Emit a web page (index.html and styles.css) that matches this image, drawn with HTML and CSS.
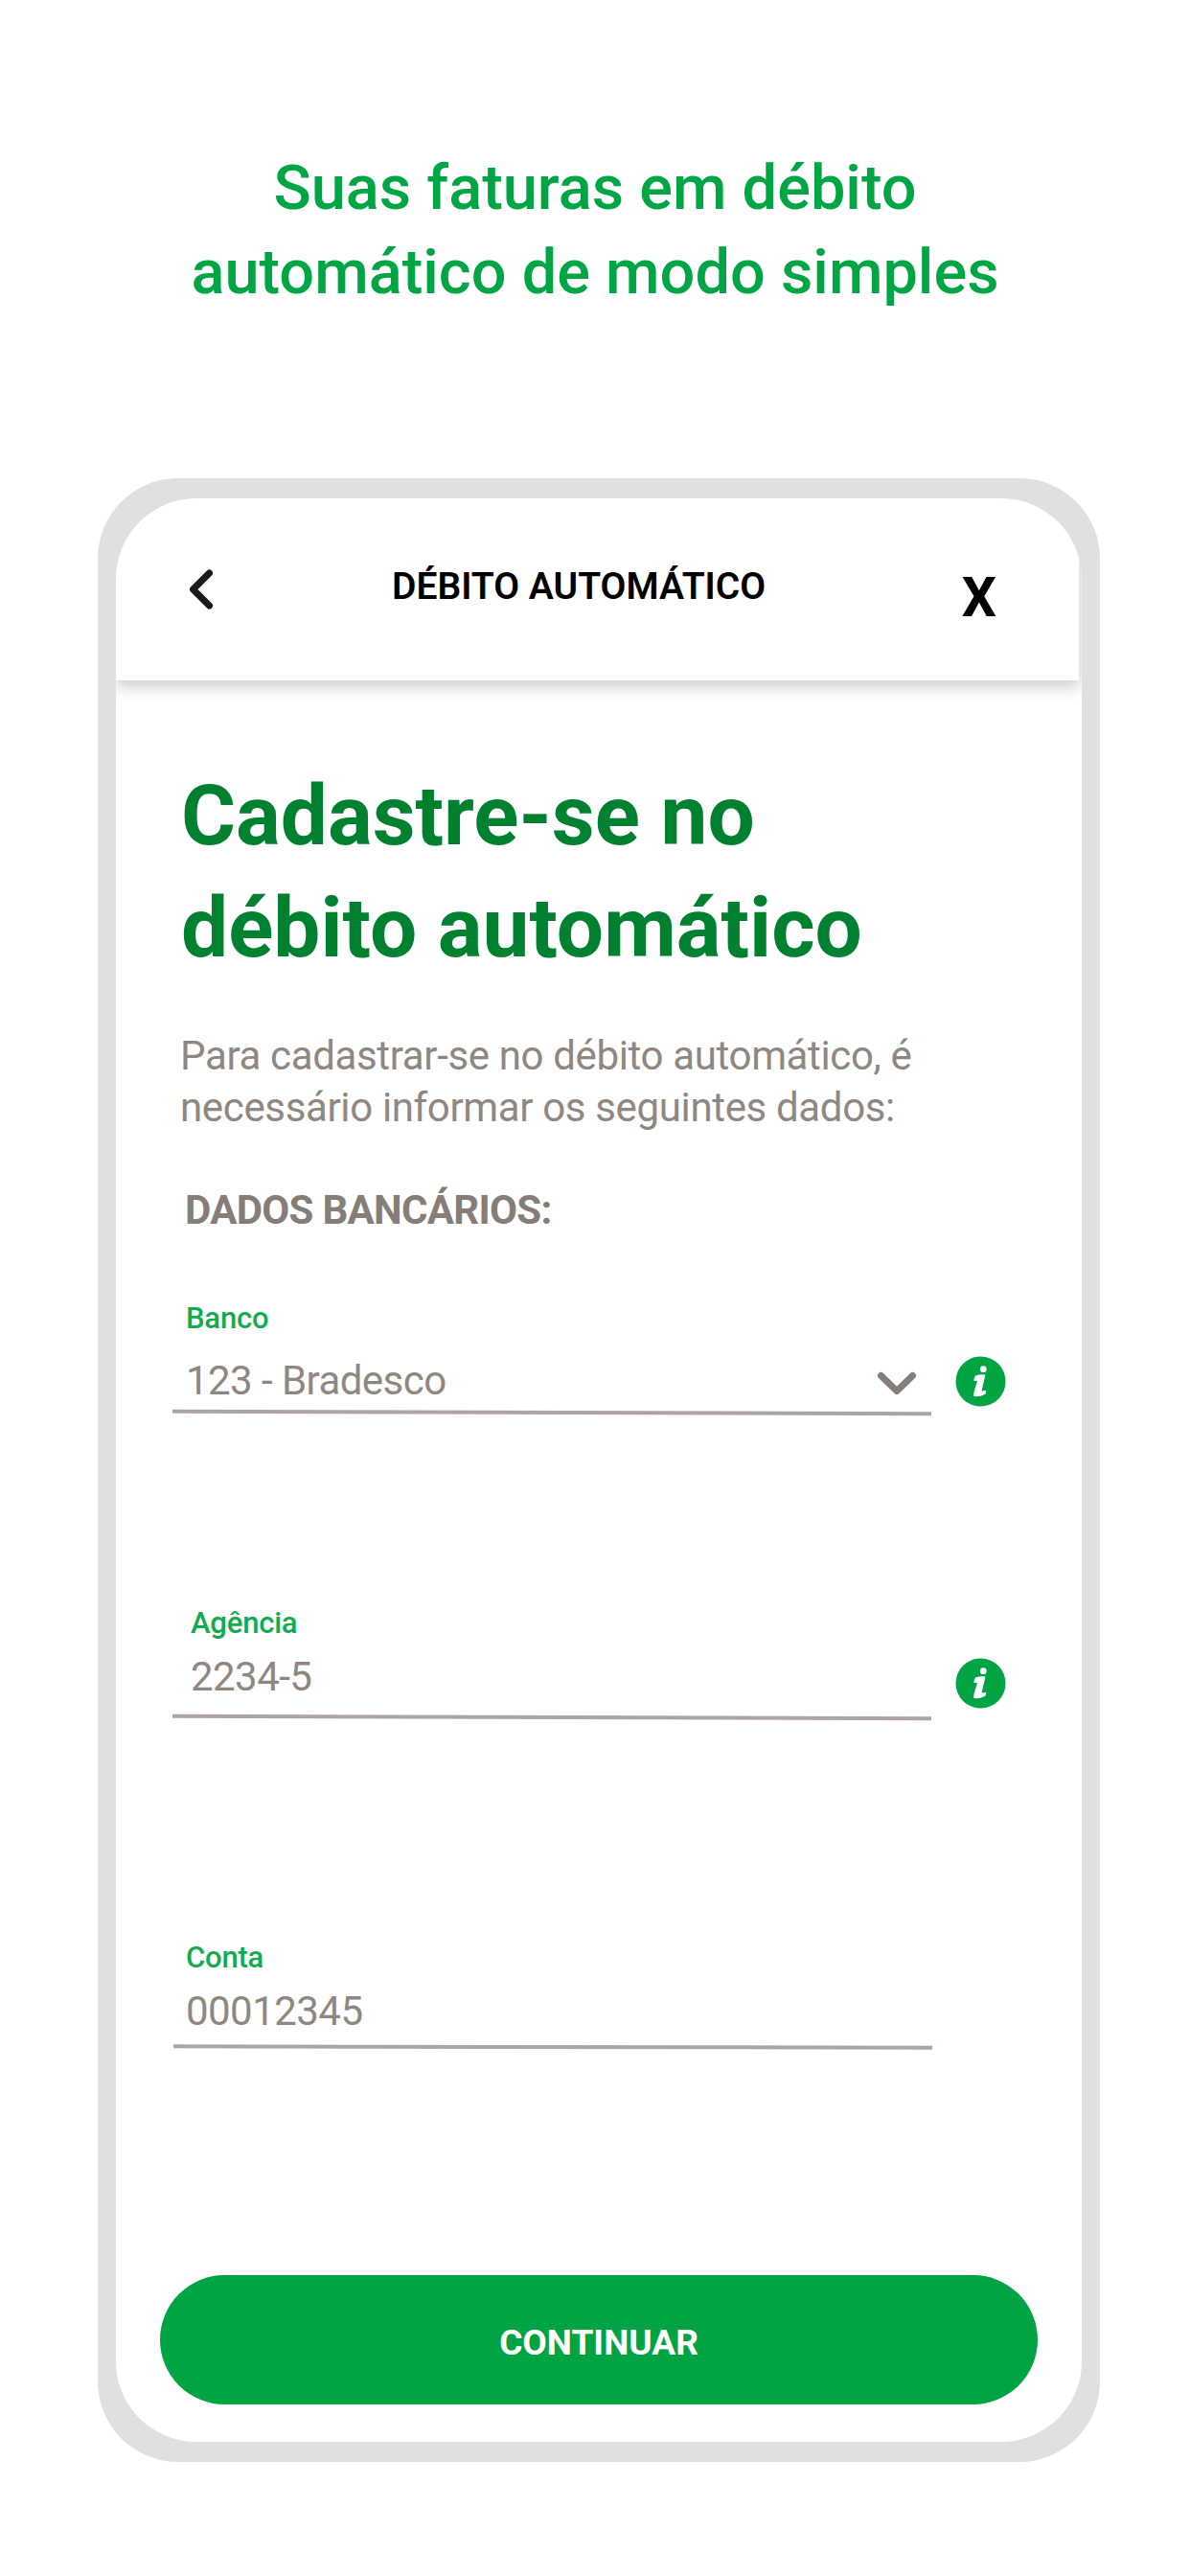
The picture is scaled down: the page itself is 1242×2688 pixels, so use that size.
FILE: index.html
```html
<!DOCTYPE html>
<html lang="pt-BR">
<head>
  <meta charset="UTF-8" />
  <meta name="viewport" content="width=device-width, initial-scale=1.0">
  <title>Débito Automático</title>
  <link rel="stylesheet" href="styles.css">
</head>
<body>
  <h1 class="headline">Suas faturas em débito<br>automático de modo simples</h1>

  <div class="phone">
    <div class="screen">
      <header class="topbar">
        <svg class="back" width="26" height="44" viewBox="0 0 26 44">
          <path d="M21.5 5 L4.5 22 L21.5 39" fill="none" stroke="#1a1a1a" stroke-width="7" stroke-linecap="round" stroke-linejoin="round" />
        </svg>
        <div class="topbar-title">DÉBITO AUTOMÁTICO</div>
        <div class="close">X</div>
      </header>

      <main class="content">
        <h2 class="title">Cadastre-se no<br>débito automático</h2>
        <p class="intro">Para cadastrar-se no débito automático, é<br>necessário informar os seguintes dados:</p>
        <h3 class="section">DADOS BANCÁRIOS:</h3>

        <div class="field banco">
          <div class="field-body">
            <div class="label">Banco</div>
            <div class="value">
              <span>123 - Bradesco</span>
              <svg class="chevron" width="42" height="28" viewBox="0 0 42 28">
                <path d="M4.5 4.5 L21 20.5 L37.5 4.5" fill="none" stroke="#857e79" stroke-width="7" stroke-linecap="round" stroke-linejoin="round" />
              </svg>
            </div>
            <div class="line"></div>
          </div>
          <svg class="info" width="53" height="53" viewBox="0 0 53 53">
            <circle cx="26.5" cy="26.5" r="26" fill="#00a443" />
            <circle cx="29.3" cy="13.7" r="3.4" fill="#fff" />
            <path d="M21 20.5 Q26 18.5 31.5 19.5 L27.5 36.5 L32 36 Q32.5 38 31 40 Q25 43 19.5 42 Q18.7 40 20 36 L23 26 L19.5 26 Q19.3 23 21 20.5 Z" fill="#fff" />
          </svg>
        </div>

        <div class="field agencia">
          <div class="field-body">
            <div class="label">Agência</div>
            <div class="value"><span>2234-5</span></div>
            <div class="line"></div>
          </div>
          <svg class="info" width="53" height="53" viewBox="0 0 53 53">
            <circle cx="26.5" cy="26.5" r="26" fill="#00a443" />
            <circle cx="29.3" cy="13.7" r="3.4" fill="#fff" />
            <path d="M21 20.5 Q26 18.5 31.5 19.5 L27.5 36.5 L32 36 Q32.5 38 31 40 Q25 43 19.5 42 Q18.7 40 20 36 L23 26 L19.5 26 Q19.3 23 21 20.5 Z" fill="#fff" />
          </svg>
        </div>

        <div class="field conta">
          <div class="field-body">
            <div class="label">Conta</div>
            <div class="value"><span>00012345</span></div>
            <div class="line"></div>
          </div>
        </div>

        <button class="continue-btn">CONTINUAR</button>
      </main>
    </div>
  </div>
</body>
</html>
```
FILE: styles.css
```css
* {
  box-sizing: border-box;
}

body {
  background-color: #fff;
  font-family: Roboto, Arial, sans-serif;
  margin: 0;
  padding: 0;
}

.headline {
  margin: 0;
  padding-top: 152px;
  height: 499px;
  color: #00a544;
  font-size: 64.9px;
  font-weight: 500;
  line-height: 88px;
  text-align: center;
}

.phone {
  width: 1046px;
  height: 2070px;
  margin-left: 102px;
  padding: 21px 19px;
  background: #e0e0e0;
  border-radius: 84px;
}

.screen {
  height: 2028px;
  background: #fff;
  border-radius: 84px;
  overflow: hidden;
}

.topbar {
  display: flex;
  align-items: center;
  height: 190px;
  width: 1005px;
  padding: 0 86px 0 76px;
  box-shadow: 0 6px 16px rgba(0, 0, 0, 0.22);
}

.topbar-title {
  margin-left: 186px;
  padding-bottom: 6px;
  font-size: 39px;
  font-weight: 600;
  line-height: 46px;
  white-space: nowrap;
  color: #000;
}

.close {
  margin-left: auto;
  padding-top: 18px;
  font-size: 57px;
  font-weight: bold;
  line-height: 66px;
  color: #000;
}

.content {
  padding: 83px 45px 0 46px;
}

.title {
  margin: 0 0 48px 22px;
  color: #008130;
  font-size: 87.3px;
  font-weight: bold;
  line-height: 117px;
}

.intro {
  margin: 0 0 55px 21px;
  color: #8f8781;
  font-size: 42px;
  letter-spacing: -0.35px;
  line-height: 54px;
  white-space: nowrap;
}

.section {
  margin: 0 0 70px 26px;
  color: #857d77;
  font-size: 42px;
  font-weight: bold;
  letter-spacing: -0.7px;
  line-height: 50px;
}

.field {
  display: flex;
  align-items: flex-end;
  gap: 25px;
  margin-left: 13px;
}

.field-body {
  width: 792px;
}

.label {
  padding-left: 14px;
  color: #12ab50;
  font-size: 31px;
  font-weight: 500;
  letter-spacing: -0.2px;
  line-height: 36px;
}

.value {
  display: flex;
  align-items: center;
  justify-content: space-between;
  height: 50px;
  margin-top: 13px;
  padding: 0 15px 0 14px;
  color: #8f8781;
  font-size: 42px;
  letter-spacing: -0.55px;
  line-height: 50px;
}

.line {
  height: 4px;
  background: #aba6a3;
  transform: rotate(0.18deg);
}

.banco {
  height: 118px;
}

.banco .value {
  margin-top: 22px;
  margin-bottom: 6px;
}

.chevron {
  margin-top: 8px;
}

.banco .info {
  margin-bottom: 8px;
}

.agencia {
  height: 118px;
  margin-top: 200px;
}

.agencia .label,
.agencia .value {
  padding-left: 19px;
}

.agencia .value {
  margin-bottom: 15px;
}

.agencia .info {
  margin-bottom: 11px;
}

.conta {
  height: 113px;
  margin-top: 231px;
}

.conta .value {
  margin-bottom: 10px;
}

.conta .line {
  margin: 0 -1px 0 1px;
  transform: rotate(0.1deg);
}

.continue-btn {
  display: block;
  width: 916px;
  height: 135px;
  margin-top: 236px;
  border: none;
  border-radius: 68px;
  background-color: #00a443;
  color: #fff;
  font-family: inherit;
  font-size: 37px;
  font-weight: bold;
  padding: 5px 0 0;
  cursor: pointer;
}
```
